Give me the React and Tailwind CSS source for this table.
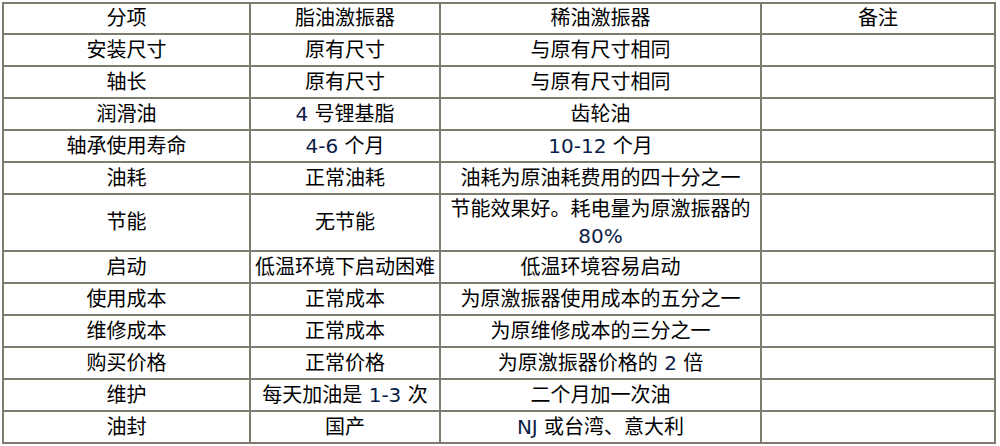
import React from "react";

const N = ({ children }) => <span className="text-[#0b1d48]">{children}</span>;

const rows = [
  ["安装尺寸", "原有尺寸", "与原有尺寸相同", ""],
  ["轴长", "原有尺寸", "与原有尺寸相同", ""],
  ["润滑油", <><N>4</N> 号锂基脂</>, "齿轮油", ""],
  ["轴承使用寿命", <><N>4-6</N> 个月</>, <><N>10-12</N> 个月</>, ""],
  ["油耗", "正常油耗", "油耗为原油耗费用的四十分之一", ""],
  ["节能", "无节能", <>节能效果好。耗电量为原激振器的<N>80%</N></>, ""],
  ["启动", "低温环境下启动困难", "低温环境容易启动", ""],
  ["使用成本", "正常成本", "为原激振器使用成本的五分之一", ""],
  ["维修成本", "正常成本", "为原维修成本的三分之一", ""],
  ["购买价格", "正常价格", <>为原激振器价格的 <N>2</N> 倍</>, ""],
  ["维护", <>每天加油是 <N>1-3</N> 次</>, "二个月加一次油", ""],
  ["油封", "国产", <><N>NJ</N> 或台湾、意大利</>, ""],
];

export default function App() {
  const font = {
    fontFamily: '"DejaVu Sans", "Noto Sans CJK SC", sans-serif',
  };
  return (
    <div className="w-[1000px] h-[446px] bg-white pt-[2px] pl-[2px]">
      <div
        className="w-[994px] grid grid-cols-[245px_188px_319px_232px] grid-rows-[29px_repeat(5,30px)_55px_repeat(6,30px)] gap-[2px] p-[2px] bg-[#7e7c6f] text-[20px] leading-[27px] text-black"
        style={font}
      >
        {["分项", "脂油激振器", "稀油激振器", "备注"].map((h, i) => (
          <div key={i} className="bg-white flex items-center justify-center text-center">
            {h}
          </div>
        ))}
        {rows.map((r, ri) =>
          r.map((c, ci) => (
            <div
              key={ri + "-" + ci}
              className="bg-white flex items-center justify-center text-center px-[1px]"
            >
              <div>{c}</div>
            </div>
          ))
        )}
      </div>
    </div>
  );
}
